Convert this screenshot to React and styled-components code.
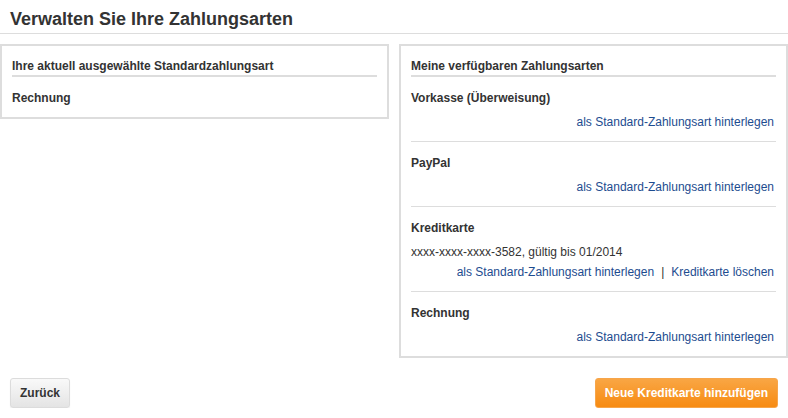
import React from "react";
import styled, { createGlobalStyle } from "styled-components";

const Global = createGlobalStyle`
  html, body {
    margin: 0;
    padding: 0;
    background: #ffffff;
  }
  body {
    font-family: "Liberation Sans", Arial, sans-serif;
    font-size: 12px;
    color: #333333;
  }
  * { box-sizing: border-box; }
`;

const Page = styled.div`
  width: 788px;
`;

const Header = styled.header`
  padding: 8px 10px 3px;
  border-bottom: 1px solid #dddddd;
`;

const Title = styled.h1`
  margin: 0;
  font-size: 18px;
  line-height: 22px;
  font-weight: bold;
  color: #333333;
`;

const Columns = styled.div`
  display: grid;
  grid-template-columns: 389px 389px;
  column-gap: 10px;
  align-items: start;
  margin-top: 10px;
`;

const Panel = styled.section`
  border: 2px solid #dddddd;
  padding: 0 10px;
`;

const PanelHeading = styled.h2`
  margin: 0;
  padding: 13px 0 1px;
  font-size: 12px;
  line-height: 15px;
  font-weight: bold;
  color: #333333;
  border-bottom: 2px solid #dddddd;
`;

const Item = styled.div`
  padding: 14px 0 11px;
  border-bottom: ${(p) => (p.$last ? "none" : "1px solid #dddddd")};
`;

const Name = styled.div`
  font-weight: bold;
  line-height: 15px;
  margin-bottom: ${(p) => (p.$gap ?? 9)}px;
`;

const Detail = styled.div`
  line-height: 15px;
  margin-bottom: 5px;
`;

const Actions = styled.div`
  display: flex;
  justify-content: flex-end;
  align-items: center;
  line-height: 15px;
  padding-right: 2px;
`;

const Link = styled.a`
  color: #1d4c8f;
  text-decoration: none;
  cursor: pointer;
`;

const Divider = styled.span`
  color: #333333;
  margin: 0 7px;
`;

const Footer = styled.div`
  display: flex;
  justify-content: space-between;
  align-items: center;
  padding: 0 10px;
  margin-top: 20px;
`;

const Button = styled.button`
  height: 30px;
  padding: 0 9px;
  font-family: "Liberation Sans", Arial, sans-serif;
  font-size: 12px;
  font-weight: bold;
  border-radius: 3px;
  cursor: pointer;
  color: ${(p) => (p.$primary ? "#ffffff" : "#333333")};
  border: 1px solid ${(p) => (p.$primary ? "#f7a54a" : "#dcdcdc")};
  background: ${(p) =>
    p.$primary
      ? "linear-gradient(#f9a644, #f78b12)"
      : "linear-gradient(#f9f9f9, #e4e4e4)"};
  box-shadow: ${(p) => (p.$primary ? "none" : "0 1px 1px rgba(0,0,0,0.08)")};
`;

const methods = [
  { name: "Vorkasse (Überweisung)" },
  { name: "PayPal" },
  {
    name: "Kreditkarte",
    detail: "xxxx-xxxx-xxxx-3582, gültig bis 01/2014",
    removable: true,
  },
  { name: "Rechnung" },
];

export default function App() {
  return (
    <Page>
      <Global />
      <Header>
        <Title>Verwalten Sie Ihre Zahlungsarten</Title>
      </Header>
      <Columns>
        <Panel>
          <PanelHeading>Ihre aktuell ausgewählte Standardzahlungsart</PanelHeading>
          <Item $last>
            <Name $gap={0}>Rechnung</Name>
          </Item>
        </Panel>
        <Panel>
          <PanelHeading>Meine verfügbaren Zahlungsarten</PanelHeading>
          {methods.map((m, i) => (
            <Item key={m.name} $last={i === methods.length - 1}>
              <Name>{m.name}</Name>
              {m.detail && <Detail>{m.detail}</Detail>}
              <Actions>
                <Link>als Standard-Zahlungsart hinterlegen</Link>
                {m.removable && (
                  <>
                    <Divider>|</Divider>
                    <Link>Kreditkarte löschen</Link>
                  </>
                )}
              </Actions>
            </Item>
          ))}
        </Panel>
      </Columns>
      <Footer>
        <Button>Zurück</Button>
        <Button $primary>Neue Kreditkarte hinzufügen</Button>
      </Footer>
    </Page>
  );
}
